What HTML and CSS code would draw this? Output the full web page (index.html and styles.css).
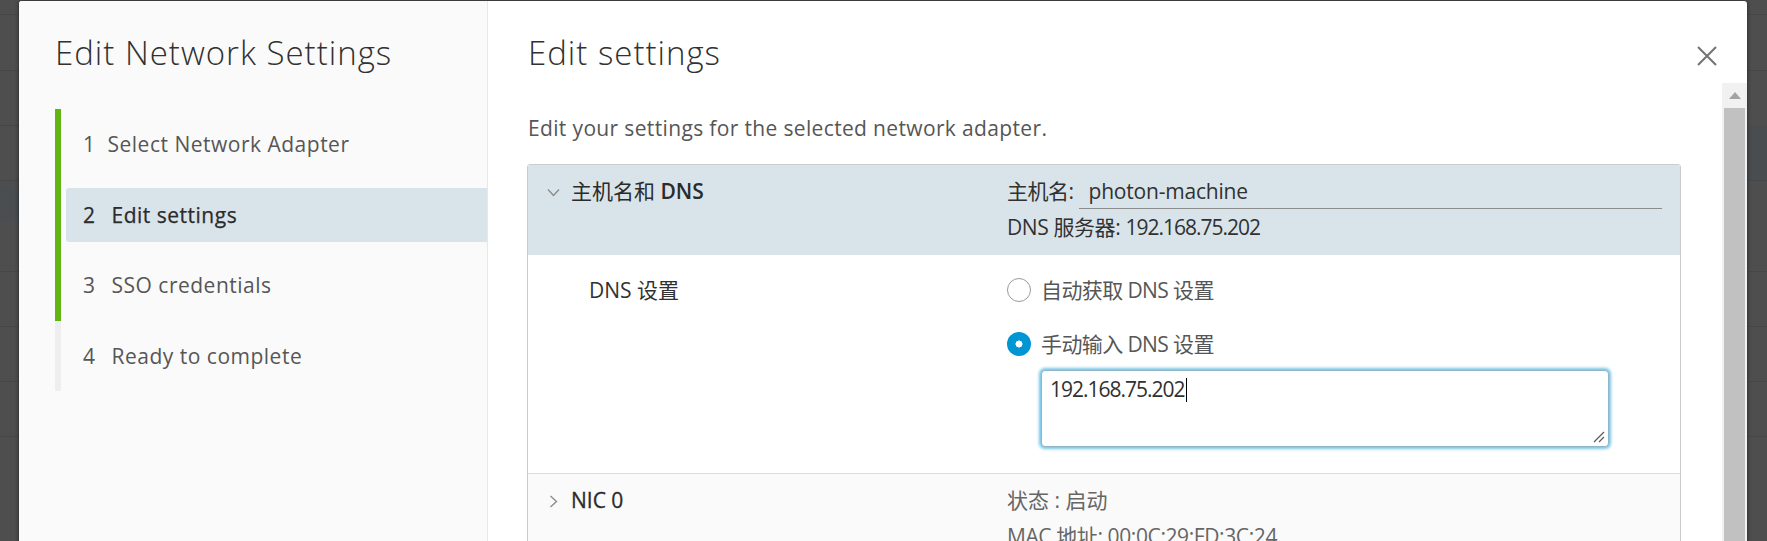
FILE: index.html
```html
<!DOCTYPE html>
<html lang="zh-CN">
<head>
<meta charset="utf-8">
<title>Edit Network Settings</title>
<link rel="stylesheet" href="styles.css">
</head>
<body>
<div class="modal">
  <nav class="wizard-nav">
    <h1 class="wizard-title">Edit Network Settings</h1>
    <ol class="steps">
      <li class="step done"><span class="step-link"><span class="num narrow">1</span>Select Network Adapter</span></li>
      <li class="step done"><span class="step-link active"><span class="num">2</span>Edit settings</span></li>
      <li class="step done"><span class="step-link"><span class="num">3</span>SSO credentials</span></li>
      <li class="step"><span class="step-link"><span class="num">4</span>Ready to complete</span></li>
    </ol>
  </nav>
  <section class="wizard-main">
    <header class="main-head">
      <h2 class="page-title">Edit settings</h2>
      <button class="close" type="button" aria-label="Close">
        <svg width="20" height="20" viewBox="0 0 20 20"><path d="M1 1 L19 19 M19 1 L1 19" stroke="#737373" stroke-width="2" fill="none"/></svg>
      </button>
    </header>
    <div class="main-body">
      <div class="content">
        <p class="desc">Edit your settings for the selected network adapter.</p>
        <div class="stack">
          <div class="stack-row stack-head">
            <div class="stack-label">
              <svg class="chev-down" width="13" height="9" viewBox="0 0 13 9"><path d="M1 1.5 L6.5 7.5 L12 1.5" stroke="#8c8c8c" stroke-width="1.4" fill="none"/></svg>主机名和 <span class="b">DNS</span>
            </div>
            <div class="stack-content">
              <div class="host-row"><span class="host-label">主机名:</span><span class="input">photon-machine</span></div>
              <div class="line tight">DNS 服务器: <span class="ip">192.168.75.202</span></div>
            </div>
          </div>
          <div class="stack-child">
            <div class="child-label">DNS 设置</div>
            <div class="child-content">
              <div class="radio"><span class="radio-mark"></span>自动获取 DNS 设置</div>
              <div class="radio second"><span class="radio-mark checked"></span>手动输入 DNS 设置</div>
              <div class="textarea"><span class="ip">192.168.75.202</span><span class="caret"></span>
                <svg class="resize" width="12" height="12" viewBox="0 0 12 12"><path d="M1 11 L11 1 M6 11 L11 6" stroke="#5a5a5a" stroke-width="1.2" fill="none"/></svg>
              </div>
            </div>
          </div>
          <div class="stack-row stack-nic">
            <div class="stack-label">
              <svg class="chev-right" width="9" height="13" viewBox="0 0 9 13"><path d="M1.5 1 L7.5 6.5 L1.5 12" stroke="#8c8c8c" stroke-width="1.4" fill="none"/></svg><span class="m">NIC 0</span>
            </div>
            <div class="stack-content muted">
              <div class="line">状态 : 启动</div>
              <div class="line tight">MAC 地址: 00:0C:29:FD:3C:24</div>
            </div>
          </div>
        </div>
      </div>
      <div class="scrollbar">
        <div class="sb-btn"><svg width="12" height="7" viewBox="0 0 12 7"><polygon points="0,7 6,0 12,7" fill="#a3a3a3"/></svg></div>
        <div class="sb-thumb"></div>
      </div>
    </div>
  </section>
</div>
</body>
</html>
```

FILE: styles.css
```css
html, body {
  margin: 0;
  padding: 0;
}
body {
  height: 541px;
  overflow: hidden;
  font-family: "Open Sans", "Noto Sans CJK SC", sans-serif;
  color: #313131;
  background-color: #4e4e4e;
  background-image:
    linear-gradient(to bottom, transparent 125px, #4a4d50 125px, #4a4d50 180px, transparent 180px),
    linear-gradient(to bottom, transparent 186px, #4a4e51 186px, #4a4e51 221px, transparent 221px),
    linear-gradient(to bottom,
      transparent 14px, #474747 14px, #474747 15px, transparent 15px,
      transparent 70px, #474747 70px, #474747 71px, transparent 71px,
      transparent 125px, #464646 125px, #464646 126px, transparent 126px,
      transparent 180px, #464646 180px, #464646 181px, transparent 181px,
      transparent 271px, #474747 271px, #474747 272px, transparent 272px,
      transparent 326px, #474747 326px, #474747 327px, transparent 327px,
      transparent 381px, #474747 381px, #474747 382px, transparent 382px,
      transparent 436px, #474747 436px, #474747 437px, transparent 437px);
  background-repeat: no-repeat;
  background-size: 20px 100%, 19px 100%, 100% 100%;
  background-position: right top, left top, left top;
}

.modal {
  display: flex;
  width: 1728px;
  height: 600px;
  margin: 1px 0 0 19px;
  background: #fff;
  border-radius: 3px 3px 0 0;
  box-shadow: 0 0 4px rgba(0, 0, 0, 0.55);
  overflow: hidden;
}

/* ---------- wizard nav ---------- */
.wizard-nav {
  width: 432px;
  flex: 0 0 432px;
  background: #fafafa;
  border-right: 1px solid #e8e8e8;
  padding-left: 36px;
}
.wizard-title,
.page-title {
  margin: 0;
  padding-top: 32px;
  font-size: 33px;
  line-height: 40px;
  font-weight: 300;
  letter-spacing: 1px;
  color: #313131;
}
.steps {
  list-style: none;
  margin: 36px 0 0 0;
  padding: 0;
}
.step {
  box-sizing: border-box;
  height: 70.5px;
  padding: 8.25px 0;
  border-left: 6px solid #eeeeee;
}
.step.done {
  border-left-color: #60b515;
}
.step-link {
  display: block;
  height: 54px;
  line-height: 54px;
  margin-left: 5px;
  padding-left: 17px;
  border-radius: 3px 0 0 3px;
  font-size: 21px;
  letter-spacing: 0.5px;
  color: #565656;
}
.step-link.active {
  background: #d9e4ea;
  color: #2b2b2b;
  font-weight: 500;
  -webkit-text-stroke: 0.25px #2b2b2b;
}
.num {
  display: inline-block;
  margin-right: 16px;
}
.num.narrow {
  margin-right: 12px;
}

/* ---------- main ---------- */
.wizard-main {
  flex: 1;
  display: flex;
  flex-direction: column;
  min-width: 0;
}
.main-head {
  height: 82px;
  flex: 0 0 82px;
  display: flex;
  justify-content: space-between;
  align-items: flex-start;
  padding-left: 40px;
}
.close {
  margin: 45px 30px 0 0;
  padding: 0;
  width: 20px;
  height: 20px;
  border: 0;
  background: transparent;
  display: block;
}
.close svg {
  display: block;
}
.main-body {
  flex: 1;
  display: flex;
  min-height: 0;
}
.content {
  flex: 1;
  padding: 30px 41px 0 39px;
  min-width: 0;
}
.desc {
  margin: 0 0 0 1px;
  font-size: 21px;
  line-height: 30px;
  color: #565656;
  letter-spacing: 0.35px;
}

/* ---------- stack view ---------- */
.stack {
  margin-top: 21px;
  border: 1px solid #cccccc;
  border-radius: 3px 3px 0 0;
  font-size: 21px;
  line-height: 36px;
}
.stack-row,
.stack-child {
  display: grid;
  grid-template-columns: 479px 1fr;
}
.stack-head {
  background: #d9e4ea;
  padding: 8px 18px 10px 0;
  border-radius: 2px 2px 0 0;
}
.stack-label {
  padding-left: 19px;
  font-weight: 400;
  color: #2b2b2b;
}
.stack-label .b {
  font-weight: 600;
}
.stack-label .m {
  -webkit-text-stroke: 0.3px #2b2b2b;
}
.stack-label svg {
  vertical-align: middle;
  position: relative;
  top: -1px;
}
.chev-down {
  margin-right: 11px;
}
.chev-right {
  margin-left: 2px;
  margin-right: 13px;
}
.host-row {
  display: flex;
}
.host-label {
  letter-spacing: -0.5px;
}
.input {
  flex: 1;
  margin-left: 5px;
  padding-left: 10px;
  height: 35px;
  border-bottom: 1px solid #8c8c8c;
  letter-spacing: -0.2px;
}
.tight {
  letter-spacing: -0.4px;
}
.ip {
  letter-spacing: -1px;
}
.stack-child {
  padding: 20px 0 26px 0;
  border-bottom: 1px solid #dddddd;
  line-height: 30px;
}
.child-label {
  padding-left: 61px;
  color: #313131;
}
.radio {
  height: 30px;
  color: #565656;
  letter-spacing: -0.6px;
}
.radio.second {
  margin-top: 24px;
}
.radio-mark {
  display: inline-block;
  box-sizing: border-box;
  width: 24px;
  height: 24px;
  border-radius: 50%;
  border: 1px solid #9a9a9a;
  background: #fff;
  margin-right: 10px;
  vertical-align: middle;
  position: relative;
  top: -2px;
}
.radio-mark.checked {
  border: 0;
  background: radial-gradient(circle, #ffffff 3.2px, #0095d3 3.8px);
}
.textarea {
  position: relative;
  box-sizing: border-box;
  width: 568px;
  height: 77px;
  margin: 11px 0 0 34px;
  padding: 3px 8px;
  border: 1px solid #8fb7c9;
  border-radius: 4px;
  box-shadow: 0 0 3px 2px #74c6e8;
  color: #313131;
  background: #fff;
}
.caret {
  display: inline-block;
  width: 1px;
  height: 24px;
  margin-left: 1px;
  background: #000;
  vertical-align: -5px;
}
.resize {
  position: absolute;
  right: 3px;
  bottom: 3px;
}
.stack-nic {
  background: #fafafa;
  padding-top: 8px;
  height: 200px;
}
.muted {
  color: #666666;
}

/* ---------- scrollbar ---------- */
.scrollbar {
  width: 25px;
  flex: 0 0 25px;
  background: #f1f1f1;
  display: flex;
  flex-direction: column;
}
.sb-btn {
  height: 25px;
  flex: 0 0 25px;
  display: flex;
  align-items: center;
  justify-content: center;
}
.sb-btn svg {
  display: block;
}
.sb-thumb {
  flex: 1;
  margin: 0 2px;
  background: #c1c1c1;
}
```
